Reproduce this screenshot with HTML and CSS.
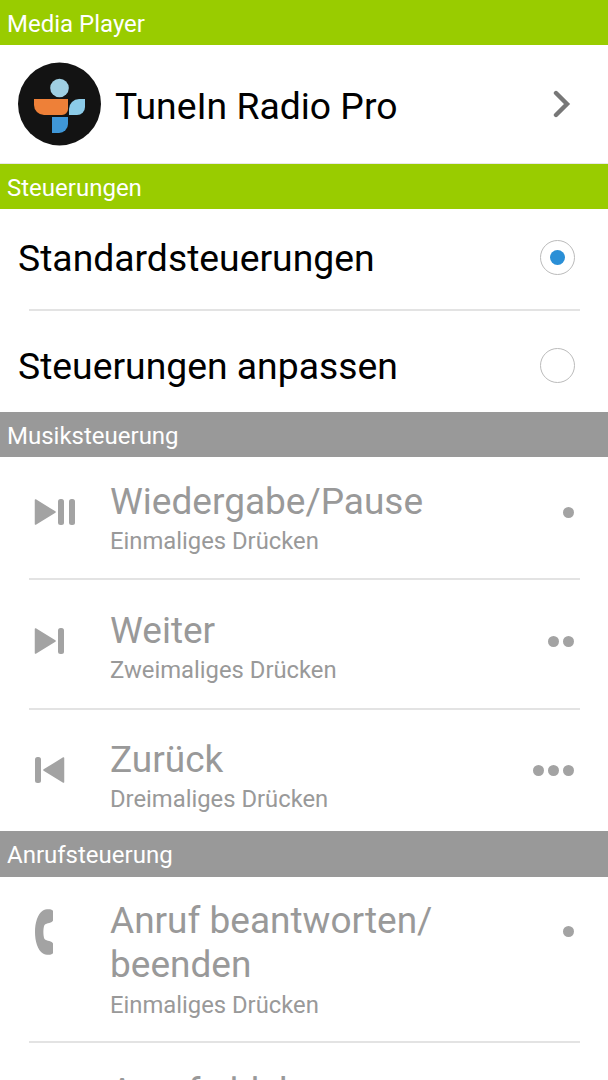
FILE: index.html
```html
<!DOCTYPE html>
<html lang="de">
<head>
<meta charset="utf-8">
<title>Media Player</title>
<link rel="stylesheet" href="styles.css">
</head>
<body>
<div class="screen">
  <div class="header green">Media Player</div>
  <div class="player">
    <svg class="logo" viewBox="0 0 84 84" width="84" height="84">
      <circle cx="41.500" cy="42" r="41.500" fill="#131313"/>
      <circle cx="41.500" cy="26" r="9.300" fill="#9fcfe3"/>
      <path d="M16 37H50V47A6 6 0 0 1 44 53H26A10 10 0 0 1 16 43Z" fill="#ee8038"/>
      <path d="M51 47A10 10 0 0 1 61 37H67V45A8 8 0 0 1 59 53H51Z" fill="#8ccbe8"/>
      <path d="M34 55H50V62A9 9 0 0 1 41 71H34Z" fill="#3f97d8"/>
    </svg>
    <div class="player-name">TuneIn Radio Pro</div>
    <svg class="chevron" viewBox="0 0 18 28" width="18" height="28"><path d="M3 3L14 14L3 25" fill="none" stroke="#777" stroke-width="4.400" stroke-linecap="round" stroke-linejoin="miter"/></svg>
  </div>
  <div class="header green">Steuerungen</div>
  <div class="radio-row r1">
    <div class="radio-label">Standardsteuerungen</div>
    <div class="radio on"><span class="radio-dot"></span></div>
  </div>
  <div class="rule"></div>
  <div class="radio-row r2">
    <div class="radio-label">Steuerungen anpassen</div>
    <div class="radio"></div>
  </div>
  <div class="header gray">Musiksteuerung</div>
  <div class="item i1">
    <svg class="icon" viewBox="0 0 42 26" width="42" height="26"><path d="M1.500 1L21 13L1.500 25Z" fill="#a3a3a3" stroke="#a3a3a3" stroke-width="1.500" stroke-linejoin="round"/><rect x="24" y="0" width="6" height="26" rx="2.500" fill="#a3a3a3"/><rect x="35" y="0" width="6" height="26" rx="2.500" fill="#a3a3a3"/></svg>
    <div class="texts"><div class="title">Wiedergabe/Pause</div><div class="sub">Einmaliges Drücken</div></div>
    <div class="dots"><i></i></div>
  </div>
  <div class="rule"></div>
  <div class="item i2">
    <svg class="icon" viewBox="0 0 42 26" width="42" height="26"><path d="M1.500 1L21 13L1.500 25Z" fill="#a3a3a3" stroke="#a3a3a3" stroke-width="1.500" stroke-linejoin="round"/><rect x="24" y="0" width="6" height="26" rx="2.500" fill="#a3a3a3"/></svg>
    <div class="texts"><div class="title">Weiter</div><div class="sub">Zweimaliges Drücken</div></div>
    <div class="dots"><i></i><i></i></div>
  </div>
  <div class="rule"></div>
  <div class="item i3">
    <svg class="icon" viewBox="0 0 42 26" width="42" height="26"><rect x="1" y="0" width="6" height="26" rx="2.500" fill="#a3a3a3"/><path d="M29.500 1L10 13L29.500 25Z" fill="#a3a3a3" stroke="#a3a3a3" stroke-width="1.500" stroke-linejoin="round"/></svg>
    <div class="texts"><div class="title">Zurück</div><div class="sub">Dreimaliges Drücken</div></div>
    <div class="dots"><i></i><i></i><i></i></div>
  </div>
  <div class="header gray tall">Anrufsteuerung</div>
  <div class="item i4">
    <svg class="icon phone" viewBox="0 0 42 46" width="42" height="46"><path d="M9 1.500C11 0 18.500 -0.500 19 2V11.500C18.500 14 12.500 14 10.500 16C9 19 9 27 10.500 30C12.500 32 18.500 32 19 34.500V44C18.500 46.500 11 46 9 44.500C3.500 41 1 32 1 23C1 14 3.500 5 9 1.500Z" fill="#a3a3a3"/></svg>
    <div class="texts"><div class="title">Anruf beantworten/<br>beenden</div><div class="sub">Einmaliges Drücken</div></div>
    <div class="dots"><i></i></div>
  </div>
  <div class="rule"></div>
  <div class="item i5">
    <div class="icon-space"></div>
    <div class="texts"><div class="title">Anruf ablehnen</div></div>
  </div>
</div>
</body>
</html>
```
FILE: styles.css
```css
html, body { margin: 0; padding: 0; background: #fff; }
body { font-family: Roboto, "Noto Sans", sans-serif; }
.screen { width: 608px; height: 1080px; overflow: hidden; background: #fff; }
.header { height: 45px; line-height: 48px; padding-left: 7px; font-size: 24px; color: #fff; box-sizing: border-box; }
.tall { height: 46px; }
.green { background: #99cc00; }
.gray { background: #999; }
.player { height: 119px; box-sizing: border-box; border-bottom: 1px solid #e8e8e8; display: flex; align-items: center; padding: 0 37px 0 18px; }
.logo { flex: none; }
.player-name { flex: 1; margin: 4px 0 0 13px; font-size: 37.300px; color: #000; }
.chevron { flex: none; }
.radio-row { display: flex; align-items: center; justify-content: space-between; padding: 0 33px 0 18px; box-sizing: border-box; }
.r1 { height: 100px; padding-bottom: 2px; }
.r2 { height: 101px; padding-top: 8px; }
.radio-label { font-size: 37.300px; color: #000; }
.radio { width: 35px; height: 35px; border: 1.500px solid #bbb; border-radius: 50%; box-sizing: border-box; display: flex; align-items: center; justify-content: center; }
.r1 .radio { margin-top: -1px; }
.radio-dot { width: 15px; height: 15px; border-radius: 50%; background: #2a8fd6; }
.rule { height: 2px; margin: 0 28px 0 29px; background: #e3e3e3; }
.item { display: flex; align-items: flex-start; padding: 0 34px; box-sizing: border-box; }
.i1 { height: 121px; }
.i2 { height: 128px; }
.i3 { height: 121px; }
.i4 { height: 164px; }
.i5 { height: 60px; }
.icon { flex: none; margin-right: 34px; }
.icon-space { width: 76px; flex: none; }
.texts { flex: 1; min-width: 0; }
.title { font-size: 37px; line-height: 44px; color: #999; }
.sub { font-size: 23.800px; line-height: 30px; color: #999; margin-top: 3px; }
.dots { display: flex; gap: 4px; flex: none; }
.dots i { width: 11px; height: 11px; border-radius: 50%; background: #a3a3a3; display: block; }
.i1 .texts { padding-top: 23px; }
.i1 .sub { margin-top: 2px; }
.i1 .icon { margin-top: 42px; }
.i1 .dots { margin-top: 50px; }
.i2 .texts { padding-top: 29px; }
.i2 .sub { margin-top: 2px; }
.i2 .icon { margin-top: 48px; }
.i2 .dots { margin-top: 56px; }
.i3 .texts { padding-top: 28px; }
.i3 .sub { margin-top: 2px; }
.i3 .icon { margin-top: 47px; }
.i3 .dots { margin-top: 55px; }
.i4 .texts { padding-top: 22px; }
.i4 .icon { margin-top: 32px; }
.i4 .dots { margin-top: 49px; }
.i5 .texts { padding-top: 27px; }
```
